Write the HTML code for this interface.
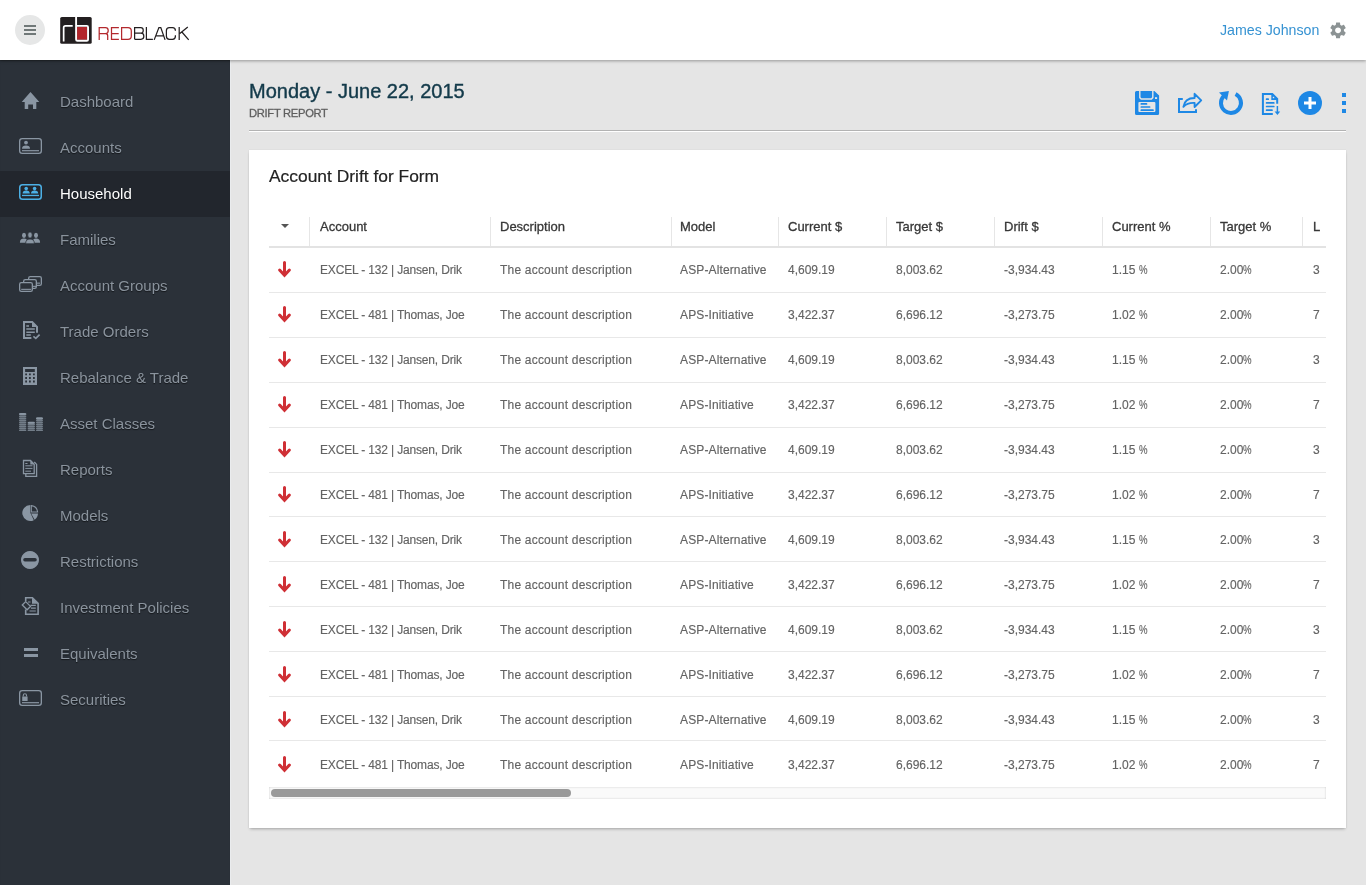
<!DOCTYPE html>
<html><head><meta charset="utf-8"><title>Drift Report</title>
<style>
*{box-sizing:border-box;margin:0;padding:0}
html,body{width:1366px;height:885px;overflow:hidden}
body{font-family:"Liberation Sans",sans-serif;background:#e5e5e5;position:relative}
.abs{position:absolute}
#hdr{position:absolute;left:0;top:0;width:1366px;height:60px;background:#fff;box-shadow:0 1px 3px rgba(0,0,0,.35);z-index:5}
#side{position:absolute;left:0;top:60px;width:230px;height:825px;background:#2b3139;z-index:3;box-shadow:inset 0 1px 1px rgba(0,0,0,.18)}
#sideline{position:absolute;left:230px;top:60px;width:1px;height:825px;background:#eaecee;z-index:3}
.nav{position:absolute;will-change:transform;left:0;width:230px;height:46px;line-height:46px;padding-left:60px;font-size:15px;color:#8a939d;text-shadow:0 1px 1px rgba(0,0,0,.55);white-space:nowrap}
.nav.act{background:#22262d;color:#fff}
svg{position:absolute;left:0;top:0;overflow:visible}
.tx{position:absolute;white-space:nowrap;will-change:transform}
#card{position:absolute;left:249px;top:150px;width:1097px;height:678px;background:#fff;box-shadow:0 2px 3px -1px rgba(0,0,0,.28),0 0 1px rgba(0,0,0,.12)}
.pc{display:inline-block;transform:scaleX(0.8);transform-origin:0 0}
.cell{position:absolute;white-space:nowrap;will-change:transform;font-size:12px;color:#636363;line-height:16px;-webkit-text-stroke:0.15px #636363}
.hcell{position:absolute;white-space:nowrap;will-change:transform;font-size:13px;color:#383838;line-height:16px;-webkit-text-stroke:0.3px #383838}
</style></head><body>

<div id="hdr">
<div class="abs" style="left:15px;top:15px;width:30px;height:30px;border-radius:50%;background:#e6e7e7"></div>
<div class="abs" style="left:24px;top:25px;width:12px;height:2px;background:#6f7777"></div>
<div class="abs" style="left:24px;top:29px;width:12px;height:2px;background:#6f7777"></div>
<div class="abs" style="left:24px;top:33px;width:12px;height:2px;background:#6f7777"></div>
<svg width="1366" height="60">
<rect x="60.2" y="17" width="31.5" height="26.8" rx="1.6" fill="#231f20"/>
<rect x="77.1" y="26.9" width="9.9" height="12.8" fill="#b3262b"/>
<path fill="none" stroke="#fff" stroke-width="1.7" d="M63.65 41.6 V27.8 Q63.65 25.95 65.5 25.95 H72.7"/>
<path fill="none" stroke="#fff" stroke-width="1.9" d="M76.1 17 V39.4 Q76.1 40.7 77.4 40.7 H86.8 Q88.05 40.7 88.05 39.4 V27.2 Q88.05 25.9 86.8 25.9 H77"/>
<g fill="none" stroke-width="1.25">
<path stroke="#b3282d" d="M99.2 39.9 V27.6 H105.4 Q108.2 27.6 108.2 30.4 V30.8 Q108.2 33.6 105.4 33.6 H99.2 M105.6 33.6 Q107.7 33.6 107.7 35.8 V39.9 M118.9 27.6 H111.5 V39.3 H118.9 M111.5 33.6 H118.7 M121.6 27.6 H128 Q131.3 27.6 131.3 30.9 V36 Q131.3 39.3 128 39.3 H121.6 Z"/>
<path stroke="#231f20" d="M134.6 39.3 V27.6 H140.8 Q143.2 27.6 143.2 30 V30.7 Q143.2 33.2 140.8 33.2 H134.6 M140.8 33.2 Q143.8 33.2 143.8 36 V36.6 Q143.8 39.3 141 39.3 H134.6 M146.4 27 V39.3 H152.9 M154.2 39.9 L158.9 27.6 H160.8 L165.1 39.9 M155.8 35.9 H163.5 M175.4 30.8 V30.5 Q175.4 27.6 172.5 27.6 H169.4 Q166.4 27.6 166.4 30.6 V36.3 Q166.4 39.3 169.4 39.3 H172.5 Q175.4 39.3 175.4 36.3 V35.2 M179.2 27 V39.9 M179.8 33.6 L187.8 27 M181.9 32 L188.7 39.9"/>
</g>
</svg>
<div class="tx" style="left:1220px;top:21px;font-size:14.2px;line-height:18px;color:#3592d2">James Johnson</div>
<svg width="1366" height="60"><g transform="translate(1328.2,20.5) scale(0.82)"><path fill="#8c9394" d="M19.14 12.94c.04-.3.06-.61.06-.94 0-.32-.02-.64-.07-.94l2.03-1.58c.18-.14.23-.41.12-.61l-1.92-3.32c-.12-.22-.37-.29-.59-.22l-2.39.96c-.5-.38-1.03-.7-1.62-.94l-.36-2.54c-.04-.24-.24-.41-.48-.41h-3.84c-.24 0-.43.17-.47.41l-.36 2.54c-.59.24-1.13.57-1.62.94l-2.39-.96c-.22-.08-.47 0-.59.22L2.74 8.87c-.12.21-.08.47.12.61l2.03 1.58c-.05.3-.09.63-.09.94s.02.64.07.94l-2.03 1.58c-.18.14-.23.41-.12.61l1.92 3.32c.12.22.37.29.59.22l2.39-.96c.5.38 1.03.7 1.62.94l.36 2.54c.05.24.24.41.48.41h3.84c.24 0 .44-.17.47-.41l.36-2.54c.59-.24 1.13-.56 1.62-.94l2.39.96c.22.08.47 0 .59-.22l1.92-3.32c.12-.22.07-.47-.12-.61l-2.01-1.58zM12 15.6c-1.98 0-3.6-1.62-3.6-3.6s1.62-3.6 3.6-3.6 3.6 1.62 3.6 3.6-1.62 3.6-3.6 3.6z"/></g></svg>
</div>
<div id="side"></div><div id="sideline"></div>
<div class="abs" style="left:0;top:60px;width:230px;height:825px;z-index:4">
<div class="nav" style="top:19px">Dashboard</div>
<div class="nav" style="top:65px">Accounts</div>
<div class="nav act" style="top:111px">Household</div>
<div class="nav" style="top:157px">Families</div>
<div class="nav" style="top:203px">Account Groups</div>
<div class="nav" style="top:249px">Trade Orders</div>
<div class="nav" style="top:295px">Rebalance &amp; Trade</div>
<div class="nav" style="top:341px">Asset Classes</div>
<div class="nav" style="top:387px">Reports</div>
<div class="nav" style="top:433px">Models</div>
<div class="nav" style="top:479px">Restrictions</div>
<div class="nav" style="top:525px">Investment Policies</div>
<div class="nav" style="top:571px">Equivalents</div>
<div class="nav" style="top:617px">Securities</div>
<svg width="230" height="825" style="top:-60px"><path fill="#8a96a3" d="M30.5 92 L39.3 102 H36.3 V109 H33 V104.6 H28.2 V109 H24.7 V102 H21.7 Z"/><rect x="19.65" y="138.65" width="21.7" height="14.7" rx="2.6" fill="none" stroke="#8a96a3" stroke-width="1.3"/><rect x="22" y="150.1" width="17" height="1.2" fill="#8a96a3"/><circle cx="26" cy="142.6" r="1.9" fill="#8a96a3"/><path fill="#8a96a3" d="M22 148.8 Q22 145.6 26 145.6 Q30 145.6 30 148.8 Z"/><rect x="19.75" y="184.75" width="21.5" height="14.5" rx="2.8" fill="none" stroke="#4cb0e6" stroke-width="1.5"/><rect x="22" y="194.8" width="17" height="1.3" fill="#4cb0e6"/><circle cx="26.2" cy="188.6" r="1.8" fill="#4cb0e6"/><path fill="#4cb0e6" d="M22.6 193.6 Q22.6 190.6 26.2 190.6 Q29.8 190.6 29.8 193.6 Z"/><circle cx="34.6" cy="188.6" r="1.8" fill="#4cb0e6"/><path fill="#4cb0e6" d="M31 193.6 Q31 190.6 34.6 190.6 Q38.2 190.6 38.2 193.6 Z"/><ellipse cx="24" cy="235.3" rx="2" ry="2.6" fill="#8a96a3"/><path fill="#8a96a3" d="M19.9 242.8 Q19.9 238.6 24 238.6 Q27.5 238.6 27.5 242.8 Z"/><ellipse cx="36" cy="235.3" rx="2" ry="2.6" fill="#8a96a3"/><path fill="#8a96a3" d="M32.5 242.8 Q32.5 238.6 36 238.6 Q40.1 238.6 40.1 242.8 Z"/><ellipse cx="30" cy="235" rx="2.3" ry="3.1" fill="#8a96a3" stroke="#2b3139" stroke-width="0.8"/><path fill="#8a96a3" stroke="#2b3139" stroke-width="0.8" d="M25.6 243.8 Q25.6 239 30 239 Q34.4 239 34.4 243.8 Z"/><rect x="28.65" y="276.65" width="12.7" height="8.7" rx="1.6" fill="#2b3139" stroke="#8a96a3" stroke-width="1.3"/><rect x="37" y="282.6" width="3" height="1.1" fill="#8a96a3"/><rect x="23.65" y="279.65" width="12.7" height="8.7" rx="1.6" fill="#2b3139" stroke="#8a96a3" stroke-width="1.3"/><rect x="33" y="285.8" width="3" height="1.1" fill="#8a96a3"/><rect x="19.65" y="282.65" width="12.7" height="8.7" rx="1.6" fill="#2b3139" stroke="#8a96a3" stroke-width="1.3"/><rect x="21.2" y="288.8" width="10" height="1.1" fill="#8a96a3"/><path fill="none" stroke="#8a96a3" stroke-width="2" d="M31.4 338.1 H24 V322 H32.2 L37 326.8 V332.8"/><path fill="#8a96a3" d="M32 322 L37 327 H32 Z"/><path stroke="#8a96a3" stroke-width="1.5" d="M26.3 325.9 H29 M26.3 329 H34.8 M26.3 332.2 H34.8 M26.3 335.1 H30.8"/><path fill="none" stroke="#8a96a3" stroke-width="1.7" d="M33.4 336.4 L35.8 338.3 L39.6 334.6"/><path fill="#8a96a3" fill-rule="evenodd" d="M23 367 H37 V385 H23 Z M25.1 369.1 V371.9 H34.8 V369.1 Z M25.200000000000003 373.5 h1.8 v1.8 h-1.8 Z M25.200000000000003 377.1 h1.8 v1.8 h-1.8 Z M25.200000000000003 380.6 h1.8 v1.8 h-1.8 Z M29.0 373.5 h1.8 v1.8 h-1.8 Z M29.0 377.1 h1.8 v1.8 h-1.8 Z M29.0 380.6 h1.8 v1.8 h-1.8 Z M33.0 373.5 h1.8 v1.8 h-1.8 Z M33.0 377.1 h1.8 v1.8 h-1.8 Z M33.0 380.6 h1.8 v1.8 h-1.8 Z"/><rect x="19" y="429.40" width="7.300000000000001" height="1.45" rx="1.2" ry="0.7" fill="#8a96a3"/><rect x="19" y="427.40" width="7.300000000000001" height="1.45" rx="1.2" ry="0.7" fill="#8a96a3"/><rect x="19" y="425.40" width="7.300000000000001" height="1.45" rx="1.2" ry="0.7" fill="#8a96a3"/><rect x="19" y="423.40" width="7.300000000000001" height="1.45" rx="1.2" ry="0.7" fill="#8a96a3"/><rect x="19" y="421.40" width="7.300000000000001" height="1.45" rx="1.2" ry="0.7" fill="#8a96a3"/><rect x="19" y="419.40" width="7.300000000000001" height="1.45" rx="1.2" ry="0.7" fill="#8a96a3"/><rect x="19" y="417.40" width="7.300000000000001" height="1.45" rx="1.2" ry="0.7" fill="#8a96a3"/><rect x="19" y="415.40" width="7.300000000000001" height="1.45" rx="1.2" ry="0.7" fill="#8a96a3"/><rect x="19" y="413.40" width="7.300000000000001" height="1.45" rx="1.2" ry="0.7" fill="#8a96a3"/><rect x="19" y="413" width="7.300000000000001" height="2" rx="1.6" ry="1" fill="#8a96a3"/><rect x="27.6" y="429.40" width="7.399999999999999" height="1.45" rx="1.2" ry="0.7" fill="#8a96a3"/><rect x="27.6" y="427.40" width="7.399999999999999" height="1.45" rx="1.2" ry="0.7" fill="#8a96a3"/><rect x="27.6" y="425.40" width="7.399999999999999" height="1.45" rx="1.2" ry="0.7" fill="#8a96a3"/><rect x="27.6" y="423.40" width="7.399999999999999" height="1.45" rx="1.2" ry="0.7" fill="#8a96a3"/><rect x="27.6" y="421.8" width="7.399999999999999" height="2" rx="1.6" ry="1" fill="#8a96a3"/><rect x="36" y="429.40" width="7" height="1.45" rx="1.2" ry="0.7" fill="#8a96a3"/><rect x="36" y="427.40" width="7" height="1.45" rx="1.2" ry="0.7" fill="#8a96a3"/><rect x="36" y="425.40" width="7" height="1.45" rx="1.2" ry="0.7" fill="#8a96a3"/><rect x="36" y="423.40" width="7" height="1.45" rx="1.2" ry="0.7" fill="#8a96a3"/><rect x="36" y="421.40" width="7" height="1.45" rx="1.2" ry="0.7" fill="#8a96a3"/><rect x="36" y="419.40" width="7" height="1.45" rx="1.2" ry="0.7" fill="#8a96a3"/><rect x="36" y="417.40" width="7" height="1.45" rx="1.2" ry="0.7" fill="#8a96a3"/><rect x="36" y="417.5" width="7" height="2" rx="1.6" ry="1" fill="#8a96a3"/><path fill="none" stroke="#8a96a3" stroke-width="1.3" d="M25.8 474.1 V476.4 H36.6 V464.4 L34.3 462"/><path fill="#2b3139" stroke="#8a96a3" stroke-width="1.3" d="M23.5 473.6 V460.5 H30.5 L34.2 464.2 V473.6 Z"/><path fill="#8a96a3" d="M30.3 460.5 L34.2 464.4 H30.3 Z"/><path stroke="#8a96a3" stroke-width="1" d="M25.3 463.5 H27.5 M25.3 465.8 H32.5 M25.3 468.4 H32.5 M25.3 471.2 H31"/><path fill="#8a96a3" d="M30.3 505 A8 8 0 1 0 33.8 520.2 L30.3 512.8 Z"/><path fill="#8a96a3" d="M31.1 513.6 L38 513.6 A8 8 0 0 1 34.6 519.8 Z"/><path fill="none" stroke="#8a96a3" stroke-width="1.1" d="M31.3 505.6 A7.2 7.2 0 0 1 37.6 512 H31.3 Z"/><path fill="#8a96a3" fill-rule="evenodd" d="M30 551 A9 9 0 1 1 29.99 551 Z M25 558 H35 A1.8 1.8 0 0 1 35 561.6 H25 A1.8 1.8 0 0 1 25 558 Z"/><path fill="none" stroke="#8a96a3" stroke-width="1.6" d="M25.7 601 V597.8 H32.4 L38.1 603.3 V614.3 H25.7 V609.5"/><path fill="#8a96a3" d="M32 597.8 L38 603.8 H32 Z"/><path stroke="#8a96a3" stroke-width="1.2" d="M28 602 H30.5 M30.5 605.4 H35.8 M31 608.1 H35.8 M29.5 611 H35.8"/><path fill="#2b3139" stroke="#8a96a3" stroke-width="1.3" d="M22.3 605 L25.7 601.6 L30.5 606.4 L27.1 609.8 Z"/><rect x="24" y="648" width="14" height="3" fill="#8a96a3"/><rect x="24" y="654" width="14" height="3" fill="#8a96a3"/><rect x="19.65" y="690.65" width="21.7" height="14.7" rx="2.6" fill="none" stroke="#8a96a3" stroke-width="1.3"/><rect x="22" y="702.1" width="17" height="1.2" fill="#8a96a3"/><path fill="#8a96a3" d="M22.2 696.5 h5.4 v4.5 h-5.4 Z"/><path fill="none" stroke="#8a96a3" stroke-width="1.1" d="M23.3 696.6 v-1.3 a1.6 1.6 0 0 1 3.2 0 v1.3"/></svg>
</div>
<div class="tx" style="left:249px;top:79px;font-size:20px;line-height:24px;color:#133a4a;-webkit-text-stroke:0.4px #133a4a">Monday - June 22, 2015</div>
<div class="tx" style="left:249px;top:106px;font-size:11.2px;line-height:14px;letter-spacing:-0.3px;color:#5f5f5f;-webkit-text-stroke:0.3px #5f5f5f">DRIFT REPORT</div>
<div class="abs" style="left:249px;top:130px;width:1097px;height:1px;background:#b3b3b3"></div>
<div class="abs" style="left:249px;top:131px;width:1097px;height:1px;background:#fff"></div>
<svg width="1366" height="885" style="z-index:1">
<path fill="#1e88e5" d="M1136.5 91 H1154.4 L1159.1 95.6 V113.6 A1.5 1.5 0 0 1 1157.6 115.1 H1136.5 A1.5 1.5 0 0 1 1135 113.6 V92.5 A1.5 1.5 0 0 1 1136.5 91 Z"/>
<path fill="none" stroke="#e5e5e5" stroke-width="1.4" d="M1139.8 91 V97.6 L1141.2 99 H1151.4 L1152.8 97.6 V91"/>
<rect x="1155" y="97.2" width="2.1" height="1.8" fill="#e5e5e5"/>
<rect x="1138.4" y="101.9" width="17" height="10.2" rx="1" fill="#e5e5e5"/>
<path stroke="#1e88e5" stroke-width="1.7" stroke-linecap="round" d="M1141.3 103.9 H1146.5 M1141.3 107 H1149.6 M1141.3 110.2 H1153"/>
<path fill="none" stroke="#1e88e5" stroke-width="2" d="M1182.8 99.1 H1179 V112.1 H1196 V109.2"/>
<path fill="none" stroke="#1e88e5" stroke-width="1.9" stroke-linejoin="round" d="M1183.4 106.8 C1184.3 101, 1188.5 98, 1194.6 98 V93.8 L1201.2 100.4 L1194.6 107 V102.9 C1190 102.6, 1186.3 103.6, 1183.4 106.8 Z"/>
<path fill="none" stroke="#1e88e5" stroke-width="4" d="M1235.6 94.1 A10 10 0 1 1 1223.9 95.9"/>
<path fill="#1e88e5" d="M1219 92.4 L1228.9 91 L1227 100.4 Z"/>
<path fill="none" stroke="#1e88e5" stroke-width="2" d="M1272.8 114.1 H1262.9 V94 H1272.3 L1277.2 99 V103.8"/>
<path fill="#1e88e5" d="M1271.3 94 H1272.8 L1278 99.3 V100.1 H1271.3 Z"/>
<rect x="1272.8" y="96.8" width="1.4" height="1.4" fill="#e5e5e5"/>
<path stroke="#1e88e5" stroke-width="1.7" stroke-linecap="round" d="M1266.6 99.2 H1268.2 M1266.6 102.9 H1273.8 M1266.6 106.5 H1273.8 M1266.6 110.2 H1272"/>
<path stroke="#1e88e5" stroke-width="1.5" d="M1277.4 106 V112"/>
<path fill="#1e88e5" d="M1274.6 111.4 H1280.2 L1277.4 115.1 Z"/>
<circle cx="1310" cy="103" r="12" fill="#1e88e5"/>
<rect x="1304" y="101.5" width="12" height="3" fill="#fff"/>
<rect x="1308.5" y="97" width="3" height="12" fill="#fff"/>
<rect x="1342" y="93" width="4" height="4" fill="#1e88e5"/>
<rect x="1342" y="101" width="4" height="4" fill="#1e88e5"/>
<rect x="1342" y="109" width="4" height="4" fill="#1e88e5"/>
</svg>
<div id="card"></div>
<div class="tx" style="left:269px;top:166px;font-size:17.4px;line-height:20px;color:#222;-webkit-text-stroke:0.2px #222">Account Drift for Form</div>
<div class="abs" style="left:269px;top:246px;width:1057px;height:2px;background:#e3e3e3"></div>
<div class="abs" style="left:309.0px;top:217px;width:1px;height:29px;background:#e6e6e6"></div>
<div class="abs" style="left:490.0px;top:217px;width:1px;height:29px;background:#e6e6e6"></div>
<div class="abs" style="left:671.0px;top:217px;width:1px;height:29px;background:#e6e6e6"></div>
<div class="abs" style="left:778.0px;top:217px;width:1px;height:29px;background:#e6e6e6"></div>
<div class="abs" style="left:886.0px;top:217px;width:1px;height:29px;background:#e6e6e6"></div>
<div class="abs" style="left:994.0px;top:217px;width:1px;height:29px;background:#e6e6e6"></div>
<div class="abs" style="left:1102.0px;top:217px;width:1px;height:29px;background:#e6e6e6"></div>
<div class="abs" style="left:1210.0px;top:217px;width:1px;height:29px;background:#e6e6e6"></div>
<div class="abs" style="left:1302.0px;top:217px;width:1px;height:29px;background:#e6e6e6"></div>
<svg width="1366" height="885"><path fill="#555" d="M281 224 H289 L285 228 Z"/></svg>
<div class="hcell" style="left:320px;top:219px">Account</div>
<div class="hcell" style="left:499.5px;top:219px">Description</div>
<div class="hcell" style="left:680px;top:219px">Model</div>
<div class="hcell" style="left:788px;top:219px">Current $</div>
<div class="hcell" style="left:896px;top:219px">Target $</div>
<div class="hcell" style="left:1004px;top:219px">Drift $</div>
<div class="hcell" style="left:1112px;top:219px">Current %</div>
<div class="hcell" style="left:1220px;top:219px">Target %</div>
<div class="hcell" style="left:1313px;top:219px">L</div>
<div class="cell" style="left:320px;top:262px;letter-spacing:-0.16px">EXCEL - 132 | Jansen, Drik</div>
<div class="cell" style="left:499.5px;top:262px;letter-spacing:0.2px">The account description</div>
<div class="cell" style="left:680px;top:262px;letter-spacing:0.13px">ASP-Alternative</div>
<div class="cell" style="left:788px;top:262px;letter-spacing:0px">4,609.19</div>
<div class="cell" style="left:896px;top:262px;letter-spacing:0px">8,003.62</div>
<div class="cell" style="left:1004px;top:262px;letter-spacing:0px">-3,934.43</div>
<div class="cell" style="left:1112px;top:262px;letter-spacing:0px">1.15 <span class="pc">%</span></div>
<div class="cell" style="left:1220px;top:262px;letter-spacing:0px">2.00<span class="pc">%</span></div>
<div class="cell" style="left:1313px;top:262px;letter-spacing:0px">3</div>
<div class="abs" style="left:269px;top:292px;width:1057px;height:1px;background:#e8e8e8"></div>
<div class="cell" style="left:320px;top:307px;letter-spacing:-0.16px">EXCEL - 481 | Thomas, Joe</div>
<div class="cell" style="left:499.5px;top:307px;letter-spacing:0.2px">The account description</div>
<div class="cell" style="left:680px;top:307px;letter-spacing:0.13px">APS-Initiative</div>
<div class="cell" style="left:788px;top:307px;letter-spacing:0px">3,422.37</div>
<div class="cell" style="left:896px;top:307px;letter-spacing:0px">6,696.12</div>
<div class="cell" style="left:1004px;top:307px;letter-spacing:0px">-3,273.75</div>
<div class="cell" style="left:1112px;top:307px;letter-spacing:0px">1.02 <span class="pc">%</span></div>
<div class="cell" style="left:1220px;top:307px;letter-spacing:0px">2.00<span class="pc">%</span></div>
<div class="cell" style="left:1313px;top:307px;letter-spacing:0px">7</div>
<div class="abs" style="left:269px;top:337px;width:1057px;height:1px;background:#e8e8e8"></div>
<div class="cell" style="left:320px;top:352px;letter-spacing:-0.16px">EXCEL - 132 | Jansen, Drik</div>
<div class="cell" style="left:499.5px;top:352px;letter-spacing:0.2px">The account description</div>
<div class="cell" style="left:680px;top:352px;letter-spacing:0.13px">ASP-Alternative</div>
<div class="cell" style="left:788px;top:352px;letter-spacing:0px">4,609.19</div>
<div class="cell" style="left:896px;top:352px;letter-spacing:0px">8,003.62</div>
<div class="cell" style="left:1004px;top:352px;letter-spacing:0px">-3,934.43</div>
<div class="cell" style="left:1112px;top:352px;letter-spacing:0px">1.15 <span class="pc">%</span></div>
<div class="cell" style="left:1220px;top:352px;letter-spacing:0px">2.00<span class="pc">%</span></div>
<div class="cell" style="left:1313px;top:352px;letter-spacing:0px">3</div>
<div class="abs" style="left:269px;top:382px;width:1057px;height:1px;background:#e8e8e8"></div>
<div class="cell" style="left:320px;top:397px;letter-spacing:-0.16px">EXCEL - 481 | Thomas, Joe</div>
<div class="cell" style="left:499.5px;top:397px;letter-spacing:0.2px">The account description</div>
<div class="cell" style="left:680px;top:397px;letter-spacing:0.13px">APS-Initiative</div>
<div class="cell" style="left:788px;top:397px;letter-spacing:0px">3,422.37</div>
<div class="cell" style="left:896px;top:397px;letter-spacing:0px">6,696.12</div>
<div class="cell" style="left:1004px;top:397px;letter-spacing:0px">-3,273.75</div>
<div class="cell" style="left:1112px;top:397px;letter-spacing:0px">1.02 <span class="pc">%</span></div>
<div class="cell" style="left:1220px;top:397px;letter-spacing:0px">2.00<span class="pc">%</span></div>
<div class="cell" style="left:1313px;top:397px;letter-spacing:0px">7</div>
<div class="abs" style="left:269px;top:427px;width:1057px;height:1px;background:#e8e8e8"></div>
<div class="cell" style="left:320px;top:442px;letter-spacing:-0.16px">EXCEL - 132 | Jansen, Drik</div>
<div class="cell" style="left:499.5px;top:442px;letter-spacing:0.2px">The account description</div>
<div class="cell" style="left:680px;top:442px;letter-spacing:0.13px">ASP-Alternative</div>
<div class="cell" style="left:788px;top:442px;letter-spacing:0px">4,609.19</div>
<div class="cell" style="left:896px;top:442px;letter-spacing:0px">8,003.62</div>
<div class="cell" style="left:1004px;top:442px;letter-spacing:0px">-3,934.43</div>
<div class="cell" style="left:1112px;top:442px;letter-spacing:0px">1.15 <span class="pc">%</span></div>
<div class="cell" style="left:1220px;top:442px;letter-spacing:0px">2.00<span class="pc">%</span></div>
<div class="cell" style="left:1313px;top:442px;letter-spacing:0px">3</div>
<div class="abs" style="left:269px;top:472px;width:1057px;height:1px;background:#e8e8e8"></div>
<div class="cell" style="left:320px;top:487px;letter-spacing:-0.16px">EXCEL - 481 | Thomas, Joe</div>
<div class="cell" style="left:499.5px;top:487px;letter-spacing:0.2px">The account description</div>
<div class="cell" style="left:680px;top:487px;letter-spacing:0.13px">APS-Initiative</div>
<div class="cell" style="left:788px;top:487px;letter-spacing:0px">3,422.37</div>
<div class="cell" style="left:896px;top:487px;letter-spacing:0px">6,696.12</div>
<div class="cell" style="left:1004px;top:487px;letter-spacing:0px">-3,273.75</div>
<div class="cell" style="left:1112px;top:487px;letter-spacing:0px">1.02 <span class="pc">%</span></div>
<div class="cell" style="left:1220px;top:487px;letter-spacing:0px">2.00<span class="pc">%</span></div>
<div class="cell" style="left:1313px;top:487px;letter-spacing:0px">7</div>
<div class="abs" style="left:269px;top:516px;width:1057px;height:1px;background:#e8e8e8"></div>
<div class="cell" style="left:320px;top:532px;letter-spacing:-0.16px">EXCEL - 132 | Jansen, Drik</div>
<div class="cell" style="left:499.5px;top:532px;letter-spacing:0.2px">The account description</div>
<div class="cell" style="left:680px;top:532px;letter-spacing:0.13px">ASP-Alternative</div>
<div class="cell" style="left:788px;top:532px;letter-spacing:0px">4,609.19</div>
<div class="cell" style="left:896px;top:532px;letter-spacing:0px">8,003.62</div>
<div class="cell" style="left:1004px;top:532px;letter-spacing:0px">-3,934.43</div>
<div class="cell" style="left:1112px;top:532px;letter-spacing:0px">1.15 <span class="pc">%</span></div>
<div class="cell" style="left:1220px;top:532px;letter-spacing:0px">2.00<span class="pc">%</span></div>
<div class="cell" style="left:1313px;top:532px;letter-spacing:0px">3</div>
<div class="abs" style="left:269px;top:561px;width:1057px;height:1px;background:#e8e8e8"></div>
<div class="cell" style="left:320px;top:577px;letter-spacing:-0.16px">EXCEL - 481 | Thomas, Joe</div>
<div class="cell" style="left:499.5px;top:577px;letter-spacing:0.2px">The account description</div>
<div class="cell" style="left:680px;top:577px;letter-spacing:0.13px">APS-Initiative</div>
<div class="cell" style="left:788px;top:577px;letter-spacing:0px">3,422.37</div>
<div class="cell" style="left:896px;top:577px;letter-spacing:0px">6,696.12</div>
<div class="cell" style="left:1004px;top:577px;letter-spacing:0px">-3,273.75</div>
<div class="cell" style="left:1112px;top:577px;letter-spacing:0px">1.02 <span class="pc">%</span></div>
<div class="cell" style="left:1220px;top:577px;letter-spacing:0px">2.00<span class="pc">%</span></div>
<div class="cell" style="left:1313px;top:577px;letter-spacing:0px">7</div>
<div class="abs" style="left:269px;top:606px;width:1057px;height:1px;background:#e8e8e8"></div>
<div class="cell" style="left:320px;top:622px;letter-spacing:-0.16px">EXCEL - 132 | Jansen, Drik</div>
<div class="cell" style="left:499.5px;top:622px;letter-spacing:0.2px">The account description</div>
<div class="cell" style="left:680px;top:622px;letter-spacing:0.13px">ASP-Alternative</div>
<div class="cell" style="left:788px;top:622px;letter-spacing:0px">4,609.19</div>
<div class="cell" style="left:896px;top:622px;letter-spacing:0px">8,003.62</div>
<div class="cell" style="left:1004px;top:622px;letter-spacing:0px">-3,934.43</div>
<div class="cell" style="left:1112px;top:622px;letter-spacing:0px">1.15 <span class="pc">%</span></div>
<div class="cell" style="left:1220px;top:622px;letter-spacing:0px">2.00<span class="pc">%</span></div>
<div class="cell" style="left:1313px;top:622px;letter-spacing:0px">3</div>
<div class="abs" style="left:269px;top:651px;width:1057px;height:1px;background:#e8e8e8"></div>
<div class="cell" style="left:320px;top:667px;letter-spacing:-0.16px">EXCEL - 481 | Thomas, Joe</div>
<div class="cell" style="left:499.5px;top:667px;letter-spacing:0.2px">The account description</div>
<div class="cell" style="left:680px;top:667px;letter-spacing:0.13px">APS-Initiative</div>
<div class="cell" style="left:788px;top:667px;letter-spacing:0px">3,422.37</div>
<div class="cell" style="left:896px;top:667px;letter-spacing:0px">6,696.12</div>
<div class="cell" style="left:1004px;top:667px;letter-spacing:0px">-3,273.75</div>
<div class="cell" style="left:1112px;top:667px;letter-spacing:0px">1.02 <span class="pc">%</span></div>
<div class="cell" style="left:1220px;top:667px;letter-spacing:0px">2.00<span class="pc">%</span></div>
<div class="cell" style="left:1313px;top:667px;letter-spacing:0px">7</div>
<div class="abs" style="left:269px;top:696px;width:1057px;height:1px;background:#e8e8e8"></div>
<div class="cell" style="left:320px;top:712px;letter-spacing:-0.16px">EXCEL - 132 | Jansen, Drik</div>
<div class="cell" style="left:499.5px;top:712px;letter-spacing:0.2px">The account description</div>
<div class="cell" style="left:680px;top:712px;letter-spacing:0.13px">ASP-Alternative</div>
<div class="cell" style="left:788px;top:712px;letter-spacing:0px">4,609.19</div>
<div class="cell" style="left:896px;top:712px;letter-spacing:0px">8,003.62</div>
<div class="cell" style="left:1004px;top:712px;letter-spacing:0px">-3,934.43</div>
<div class="cell" style="left:1112px;top:712px;letter-spacing:0px">1.15 <span class="pc">%</span></div>
<div class="cell" style="left:1220px;top:712px;letter-spacing:0px">2.00<span class="pc">%</span></div>
<div class="cell" style="left:1313px;top:712px;letter-spacing:0px">3</div>
<div class="abs" style="left:269px;top:740px;width:1057px;height:1px;background:#e8e8e8"></div>
<div class="cell" style="left:320px;top:757px;letter-spacing:-0.16px">EXCEL - 481 | Thomas, Joe</div>
<div class="cell" style="left:499.5px;top:757px;letter-spacing:0.2px">The account description</div>
<div class="cell" style="left:680px;top:757px;letter-spacing:0.13px">APS-Initiative</div>
<div class="cell" style="left:788px;top:757px;letter-spacing:0px">3,422.37</div>
<div class="cell" style="left:896px;top:757px;letter-spacing:0px">6,696.12</div>
<div class="cell" style="left:1004px;top:757px;letter-spacing:0px">-3,273.75</div>
<div class="cell" style="left:1112px;top:757px;letter-spacing:0px">1.02 <span class="pc">%</span></div>
<div class="cell" style="left:1220px;top:757px;letter-spacing:0px">2.00<span class="pc">%</span></div>
<div class="cell" style="left:1313px;top:757px;letter-spacing:0px">7</div>
<svg width="1366" height="885"><g fill="none" stroke="#cf2f35" stroke-width="3" stroke-linecap="round" stroke-linejoin="miter"><path d="M284.5 262.5 V275 M279.6 270 L284.5 275.2 L289.4 270"/><path d="M284.5 307.5 V320 M279.6 315 L284.5 320.2 L289.4 315"/><path d="M284.5 352.5 V365 M279.6 360 L284.5 365.2 L289.4 360"/><path d="M284.5 397.5 V410 M279.6 405 L284.5 410.2 L289.4 405"/><path d="M284.5 442.5 V455 M279.6 450 L284.5 455.2 L289.4 450"/><path d="M284.5 487.5 V500 M279.6 495 L284.5 500.2 L289.4 495"/><path d="M284.5 532.5 V545 M279.6 540 L284.5 545.2 L289.4 540"/><path d="M284.5 577.5 V590 M279.6 585 L284.5 590.2 L289.4 585"/><path d="M284.5 622.5 V635 M279.6 630 L284.5 635.2 L289.4 630"/><path d="M284.5 667.5 V680 M279.6 675 L284.5 680.2 L289.4 675"/><path d="M284.5 712.5 V725 M279.6 720 L284.5 725.2 L289.4 720"/><path d="M284.5 757.5 V770 M279.6 765 L284.5 770.2 L289.4 765"/></g></svg>
<div class="abs" style="left:269px;top:787px;width:1057px;height:12px;background:#fafafa;box-shadow:inset 0 0 2px rgba(0,0,0,.22)"></div>
<div class="abs" style="left:271px;top:789px;width:300px;height:8px;border-radius:4px;background:#9a9a9a"></div>
</body></html>
